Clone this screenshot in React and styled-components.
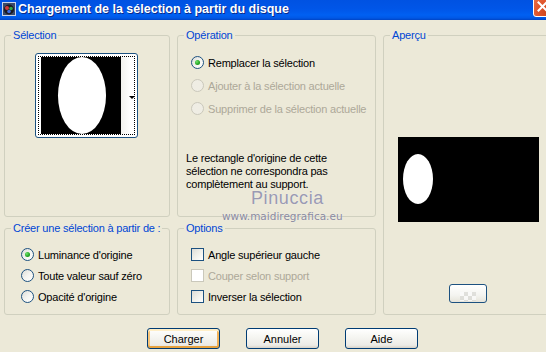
import React from 'react';
import styled, { createGlobalStyle } from 'styled-components';

const Global = createGlobalStyle`
  html, body { margin: 0; padding: 0; background: #ECE9D8; }
  body { font-family: "Liberation Sans", Arial, sans-serif; }
`;

const Window = styled.div`
  position: relative;
  width: 546px;
  height: 352px;
  overflow: hidden;
  background: #ECE9D8;
  font-family: "Liberation Sans", Arial, sans-serif;
  font-size: 11px;
  letter-spacing: -0.2px;
  color: #000;
`;

const TitleBar = styled.div`
  height: 20px;
  display: flex;
  align-items: flex-start;
  overflow: hidden;
  background: linear-gradient(180deg, #0052E2 0%, #0056E8 45%, #0060F2 75%, #0058E6 90%, #0044C4 100%);
`;

const TitleIcon = styled.svg`
  flex: none;
  margin: 2px 2px 0 2px;
`;

const TitleText = styled.div`
  color: #fff;
  font-weight: bold;
  font-size: 12.5px;
  line-height: 19px;
  letter-spacing: 0;
  text-shadow: 1px 1px 0 #0A2A8A;
  white-space: nowrap;
`;

const CloseButton = styled.div`
  flex: none;
  margin-left: auto;
  margin-right: -9px;
  margin-top: -5px;
  width: 22px;
  height: 22px;
  box-sizing: border-box;
  border: 1px solid #fff;
  border-radius: 3px;
  background: radial-gradient(circle at 70% 80%, #CC4419 0%, #E0552C 50%, #E9774F 100%);
  display: flex;
  align-items: center;
  justify-content: flex-start;
  padding-left: 3px;
`;

const Body = styled.div`
  padding: 9px 0 0 4px;
`;

const Groups = styled.div`
  display: grid;
  grid-template-columns: 166px 199px 170px;
  grid-template-rows: 188px 93px;
  column-gap: 7px;
  row-gap: 5px;
`;

const Group = styled.fieldset`
  margin: 0;
  padding: 0;
  min-width: 0;
  box-sizing: border-box;
  border: 1px solid #D0D0BF;
  border-radius: 3px;
  grid-column: ${p => p.$col};
  grid-row: ${p => p.$row};
  display: flex;
  flex-direction: column;
`;

const Legend = styled.legend`
  margin-left: 6px;
  padding: 0 2px;
  color: #0046D5;
  font-size: 11px;
  line-height: 13px;
`;

const SelectionContent = styled.div`
  display: flex;
  justify-content: center;
  padding-top: 11px;
  padding-right: 1px;
`;

const ThumbButton = styled.div`
  width: 103px;
  height: 85px;
  box-sizing: border-box;
  border: 1px solid #1C5180;
  border-radius: 3px;
  background: #fff;
  padding: 2px;
`;

const FocusRect = styled.div`
  height: 100%;
  box-sizing: border-box;
  border: 1px dotted #000;
  display: flex;
`;

const ThumbImage = styled.svg`
  flex: none;
  margin-left: 2px;
  display: block;
`;

const ThumbStrip = styled.div`
  flex: 1;
  display: flex;
  align-items: center;
  justify-content: flex-end;
  background: linear-gradient(90deg, #F2F2EE 0%, #FFFFFF 70%);
`;

const Arrow = styled.span`
  width: 0;
  height: 0;
  border-left: 3px solid transparent;
  border-right: 3px solid transparent;
  border-top: 3px solid #000;
  margin-top: 4px;
  margin-right: -1px;
`;

const OperationContent = styled.div`
  padding: 9px 0 0 13px;
  display: flex;
  flex-direction: column;
`;

const Note = styled.p`
  margin: 32px 0 0 -5px;
  line-height: 13px;
`;

const CreateContent = styled.div`
  padding: 9px 0 0 16px;
  display: flex;
  flex-direction: column;
`;

const OptionsContent = styled.div`
  padding: 9px 0 0 13px;
  display: flex;
  flex-direction: column;
`;

const Row = styled.div`
  display: flex;
  align-items: center;
  gap: 4px;
  height: ${p => p.$h}px;
  white-space: nowrap;
  color: ${p => (p.$disabled ? '#ACA899' : '#000')};
`;

const RadioCircle = styled.span`
  flex: none;
  width: 13px;
  height: 13px;
  box-sizing: border-box;
  border-radius: 50%;
  border: 1px solid ${p => (p.$disabled ? '#CAC8BB' : '#1C5180')};
  background: ${p => (p.$disabled ? '#EFEDE4' : 'linear-gradient(135deg, #DCDCD7 0%, #F4F4F0 50%, #FFFFFF 100%)')};
  display: flex;
  align-items: center;
  justify-content: center;
  &::after {
    content: '';
    display: ${p => (p.$checked ? 'block' : 'none')};
    width: 5px;
    height: 5px;
    border-radius: 50%;
    background: radial-gradient(circle at 35% 35%, #6FE36B 0%, #21A121 60%, #188818 100%);
  }
`;

const CheckBox = styled.span`
  flex: none;
  width: 13px;
  height: 13px;
  box-sizing: border-box;
  border: 1px solid ${p => (p.$disabled ? '#CAC8BB' : '#1C5180')};
  background: ${p => (p.$disabled ? '#FFFFFF' : 'linear-gradient(135deg, #DCDCD7 0%, #F0F0EA 50%, #FFFFFF 100%)')};
`;

const PreviewContent = styled.div`
  display: flex;
  flex-direction: column;
  align-items: center;
  padding-top: 95px;
`;

const PreviewImage = styled.svg`
  display: block;
`;

const SmallButton = styled.div`
  margin-top: 62px;
  width: 38px;
  height: 19px;
  box-sizing: border-box;
  border: 1px solid #1C5180;
  border-radius: 3px;
  background: linear-gradient(180deg, #FFFFFF 0%, #F4F4F0 60%, #E6E4DA 100%);
  display: flex;
  justify-content: center;
  align-items: flex-end;
  padding-bottom: 1px;
`;

const Checker = styled.span`
  width: 16px;
  height: 9px;
  background: conic-gradient(#DADAD6 25%, #FAFAFA 0 50%, #DADAD6 0 75%, #FAFAFA 0) 0 0 / 8px 8px;
  opacity: 0.8;
`;

const ButtonRow = styled.div`
  display: flex;
  gap: 26px;
  margin-top: 13px;
  padding-left: 143px;
`;

const Button = styled.div`
  width: 73px;
  height: 21px;
  box-sizing: border-box;
  border: 1px solid #003C74;
  border-radius: 3px;
  background: linear-gradient(180deg, #FFFFFF 0%, #F6F6F2 40%, #ECEBE6 85%, #D8D2C6 100%);
  box-shadow: ${p =>
    p.$default
      ? 'inset 0 2px 0 #FFEFC8, inset 0 -2px 0 #E6A23F, inset 2px 0 0 #F7C57A, inset -2px 0 0 #F2B35A'
      : 'none'};
  display: flex;
  align-items: center;
  justify-content: center;
  font-size: 11px;
  letter-spacing: 0;
`;

const WatermarkName = styled.div`
  position: absolute;
  left: 251px;
  top: 189px;
  font-family: "Liberation Sans", Arial, sans-serif;
  font-size: 18px;
  line-height: 18px;
  letter-spacing: 0.6px;
  color: #9A9AB2;
  text-shadow: 0 0 1px #F4F4F4;
`;

const WatermarkUrl = styled.div`
  position: absolute;
  left: 222px;
  top: 210px;
  font-family: "DejaVu Sans", sans-serif;
  font-size: 10.5px;
  line-height: 12px;
  letter-spacing: 0;
  color: #8A8A9E;
  text-shadow: 0 0 1px #F4F4F4;
`;

const Radio = ({ checked, disabled, children, h }) => (
  <Row $h={h} $disabled={disabled}>
    <RadioCircle $checked={checked} $disabled={disabled} />
    <span>{children}</span>
  </Row>
);

const Check = ({ disabled, children, h }) => (
  <Row $h={h} $disabled={disabled}>
    <CheckBox $disabled={disabled} />
    <span>{children}</span>
  </Row>
);

export default function App() {
  return (
    <>
      <Global />
      <Window>
        <TitleBar>
          <TitleIcon width="14" height="14" viewBox="0 0 14 14">
            <rect x="0.5" y="0.5" width="13" height="13" fill="#3A4A6A" stroke="#C8D4E8" />
            <circle cx="7" cy="7.5" r="5" fill="#1A1A22" />
            <circle cx="5" cy="6" r="2" fill="#D03A3A" />
            <circle cx="9" cy="6.5" r="1.8" fill="#2FA84A" />
            <circle cx="7" cy="9.5" r="1.8" fill="#3A6AE0" />
          </TitleIcon>
          <TitleText>Chargement de la sélection à partir du disque</TitleText>
          <CloseButton>
            <svg width="11" height="11" viewBox="0 0 11 11">
              <path d="M1.5 1.5 L9.5 9.5 M9.5 1.5 L1.5 9.5" stroke="#fff" strokeWidth="2" strokeLinecap="square" />
            </svg>
          </CloseButton>
        </TitleBar>
        <Body>
          <Groups>
            <Group $col={1} $row={1}>
              <Legend>Sélection</Legend>
              <SelectionContent>
                <ThumbButton>
                  <FocusRect>
                    <ThumbImage width="80" height="77" viewBox="0 0 80 77">
                      <rect width="80" height="77" fill="#000" />
                      <ellipse cx="41" cy="38.5" rx="24" ry="38.5" fill="#fff" />
                    </ThumbImage>
                    <ThumbStrip>
                      <Arrow />
                    </ThumbStrip>
                  </FocusRect>
                </ThumbButton>
              </SelectionContent>
            </Group>

            <Group $col={2} $row={1}>
              <Legend>Opération</Legend>
              <OperationContent>
                <Radio h={23} checked>Remplacer la sélection</Radio>
                <Radio h={23} disabled>Ajouter à la sélection actuelle</Radio>
                <Radio h={23} disabled>Supprimer de la sélection actuelle</Radio>
                <Note>
                  Le rectangle d'origine de cette
                  <br />
                  sélection ne correspondra pas
                  <br />
                  complètement au support.
                </Note>
              </OperationContent>
            </Group>

            <Group $col={3} $row="1 / span 2">
              <Legend>Aperçu</Legend>
              <PreviewContent>
                <PreviewImage width="141" height="85" viewBox="0 0 141 85">
                  <rect width="141" height="85" fill="#000" />
                  <ellipse cx="20" cy="42" rx="15" ry="25" fill="#fff" />
                </PreviewImage>
                <SmallButton>
                  <Checker />
                </SmallButton>
              </PreviewContent>
            </Group>

            <Group $col={1} $row={2}>
              <Legend>Créer une sélection à partir de :</Legend>
              <CreateContent>
                <Radio h={21} checked>Luminance d'origine</Radio>
                <Radio h={21}>Toute valeur sauf zéro</Radio>
                <Radio h={21}>Opacité d'origine</Radio>
              </CreateContent>
            </Group>

            <Group $col={2} $row={2}>
              <Legend>Options</Legend>
              <OptionsContent>
                <Check h={21}>Angle supérieur gauche</Check>
                <Check h={21} disabled>Couper selon support</Check>
                <Check h={21}>Inverser la sélection</Check>
              </OptionsContent>
            </Group>
          </Groups>
          <ButtonRow>
            <Button $default>Charger</Button>
            <Button>Annuler</Button>
            <Button>Aide</Button>
          </ButtonRow>
        </Body>
        <WatermarkName>Pinuccia</WatermarkName>
        <WatermarkUrl>www.maidiregrafica.eu</WatermarkUrl>
      </Window>
    </>
  );
}
